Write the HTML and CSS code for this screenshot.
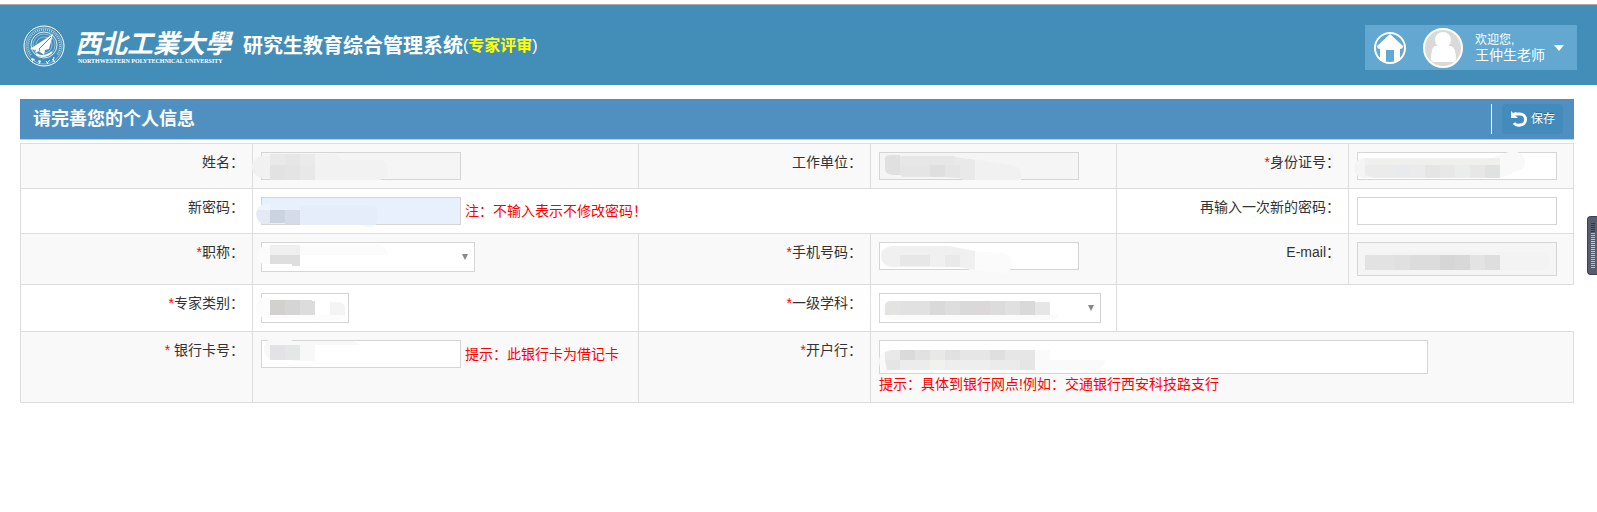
FILE: index.html
```html
<!DOCTYPE html>
<html lang="zh-CN">
<head>
  <meta charset="UTF-8">
  <meta name="viewport" content="width=device-width, initial-scale=1.0">
  <title>研究生教育综合管理系统</title>
  <link rel="stylesheet" href="styles.css">
</head>
<body>
  <header class="navbar">
    <div class="brand">
      <svg class="emblem" width="42" height="42" viewBox="0 0 42 42" fill="none" stroke="#fff">
        <circle cx="21" cy="21" r="20" stroke-width="1"/>
        <circle cx="21" cy="21" r="18" stroke-width="1" opacity=".4"/>
        <path d="M8 30 A16 16 0 1 1 34 30" stroke-width="2" stroke-dasharray="1 1" opacity=".6"/>
        <circle cx="21" cy="20" r="13" stroke-width="1" opacity=".8"/>
        <circle cx="21" cy="20" r="11" stroke-width="1" opacity=".4"/>
        <circle cx="21" cy="20" r="8" stroke-width="1" opacity=".4"/>
        <path d="M30 9 L7 24 L13 25 L12 28 L16 26 L21 30 L22 25 L26 24 Z" fill="#fff" stroke="none"/>
        <path d="M28 12 L16 24 L17 26" stroke="#438eb9" stroke-width="1"/>
        <path d="M13 29 Q21 34 29 27" stroke-width="2"/>
        <path d="M8 34 l4 1 M10 33 l-1 4 M15 36 l3 1 M17 35 l-1 4 M23 36 l2 3 M24 38 l3 -3 M29 34 l3 3 M30 37 l1 -5" stroke-width="1"/>
      </svg>
      <div class="school">
        <span class="school-cn">西北工業大學</span>
        <span class="school-en">NORTHWESTERN POLYTECHNICAL UNIVERSITY</span>
      </div>
      <h1>研究生教育综合管理系统</h1>
      <span class="role">(<b>专家评审</b>)</span>
    </div>
    <div class="user-box">
      <a class="home" href="#" aria-label="首页">
        <svg width="32" height="32" viewBox="0 0 32 32">
          <circle cx="16" cy="16" r="15" fill="none" stroke="#fff" stroke-width="2"/>
          <path d="M16 2 L29 14 Q29 17 26 17 V29 H20 V18 H12 V29 H6 V17 Q3 17 3 14 Z" fill="#fff"/>
        </svg>
      </a>
      <svg class="avatar" width="40" height="40" viewBox="0 0 40 40">
        <circle cx="20" cy="20" r="19" fill="#d9d9d9" stroke="#fff" stroke-width="2"/>
        <circle cx="20" cy="12" r="8" fill="#fff"/>
        <path d="M12 18 H28 Q33 20 33 31 Q33 34 29 34 H11 Q8 34 8 31 Q8 20 12 18 Z" fill="#fff"/>
      </svg>
      <button class="user-menu" type="button">
        <span class="user-name"><small>欢迎您,</small>王仲生老师</span>
        <span class="caret"></span>
      </button>
    </div>
  </header>

  <main class="content">
    <form>
      <div class="panel-header">
        <h2>请完善您的个人信息</h2>
        <div class="toolbar">
          <button class="save" type="button">
            <svg width="18" height="18" viewBox="0 0 18 18" fill="none">
              <path d="M5 4 H10 A5 5 0 0 1 10 15 Q6 16 4 13" stroke="#fff" stroke-width="3"/>
              <path d="M1 1 L3 3 L6 2 L5 5 L8 8 H1 Z" fill="#fff"/>
            </svg>
            保存
          </button>
        </div>
      </div>

      <table class="info">
        <colgroup>
          <col class="col-label"><col class="col-wide">
          <col class="col-label"><col class="col-mid">
          <col class="col-label"><col>
        </colgroup>
        <tr>
          <th><label for="name">姓名：</label></th>
          <td>
            <div class="field">
              <input type="text" id="name" readonly>
              <svg class="mask" width="1" height="1">
                <rect x="-9" y="4" width="34" height="22" rx="11" fill="#f1f1f1"/>
                <path d="M11 2 H72 Q78 3 80 8 H120 Q127 10 127 18 Q127 26 118 28 H11 Z" fill="#f2f2f2"/>
                <path d="M9 2 h15 v11 h-15 z" fill="#e9e9e9"/><path d="M24 2 h15 v11 h-15 z" fill="#e6e6e6"/><path d="M39 2 h15 v11 h-15 z" fill="#eaeaea"/>
                <path d="M9 13 h15 v15 h-15 z" fill="#e2e2e2"/><path d="M24 13 h15 v15 h-15 z" fill="#e4e4e4"/><path d="M39 13 h15 v15 h-15 z" fill="#e8e8e8"/>
              </svg>
            </div>
          </td>
          <th><label for="unit">工作单位：</label></th>
          <td>
            <div class="field">
              <input type="text" id="unit" readonly>
              <svg class="mask" width="1" height="1">
                <path d="M88 6 L130 13 Q142 14 142 22 V28 H88 Z" fill="#f1f1f1"/>
                <path d="M6 5 Q8 3 12 3 H21 V23 H14 Q6 22 6 17 Z" fill="#e0e0e0"/>
                <path d="M21 4 H76 V13 H21 Z" fill="#e7e7e7"/><path d="M21 13 H51 V25 H24 L21 23 Z" fill="#e5e5e5"/>
                <path d="M51 13 H66 V25 H51 Z" fill="#dfdfdf"/><path d="M66 13 H81 V26 L66 25 Z" fill="#e5e5e5"/>
                <path d="M76 5 L96 8 V28 H84 L81 26 V13 H76 Z" fill="#e9e9e9"/>
              </svg>
            </div>
          </td>
          <th><label for="idcard"><i>*</i>身份证号：</label></th>
          <td>
            <div class="field">
              <input type="text" id="idcard">
              <svg class="mask" width="1" height="1">
                <rect x="-3" y="6" width="24" height="20" rx="10" fill="#f4f4f4"/>
                <path d="M138 4 L152 0 H160 Q168 2 168 10 Q168 18 160 19 L150 24 L138 26 Z" fill="#f9f9f9"/>
                <path d="M8 6 H143 V13 H8 Z" fill="#efefee"/>
                <path d="M8 13 H38 V26 H16 L8 23 Z" fill="#ebebeb"/><path d="M38 13 H53 V26 H38 Z" fill="#e9eaed"/>
                <path d="M53 13 H68 V26 H53 Z" fill="#ebebeb"/><path d="M68 13 H83 V26 H68 Z" fill="#e5e5e5"/>
                <path d="M83 13 H98 V26 H83 Z" fill="#e8e8e8"/><path d="M98 13 H113 V26 H98 Z" fill="#ebedec"/>
                <path d="M113 13 H128 V26 H113 Z" fill="#e7e7e7"/><path d="M128 13 H143 V26 H128 Z" fill="#e0e2e1"/>
              </svg>
            </div>
          </td>
        </tr>
        <tr>
          <th><label for="pwd">新密码：</label></th>
          <td colspan="3">
            <div class="field">
              <input type="password" id="pwd" class="filled">
              <span class="tip">注：不输入表示不修改密码！</span>
              <svg class="mask" width="1" height="1">
                <path d="M98 27 H115 Q112 31 106 30 Z" fill="#f8f9fd"/>
                <path d="M39 8 H112 Q118 10 117 20 L115 28 H39 Z" fill="#e5edfb"/>
                <path d="M9 6 Q-4 8 -5 17 Q-4 27 5 27 H9 Z" fill="#e4e9f3"/>
                <path d="M9 6 V13 H-4 Q-2 7 9 6 Z" fill="#eff3fb"/>
                <path d="M9 13 H24 V26 H9 Z" fill="#ccd3e0"/><path d="M24 13 H39 V27 H24 Z" fill="#d5dbe8"/>
              </svg>
            </div>
          </td>
          <th><label for="pwd2">再输入一次新的密码：</label></th>
          <td><div class="field"><input type="password" id="pwd2"></div></td>
        </tr>
        <tr>
          <th><label for="title"><i>*</i>职称：</label></th>
          <td>
            <div class="field">
              <span class="select title-select"><select id="title"><option></option></select></span>
              <svg class="mask" width="1" height="1">
                <path d="M-4 12 Q-3 3 12 3 H118 Q126 6 127 13 H39 V22 H2 Q-4 20 -4 12 Z" fill="#fbfbfb"/>
                <path d="M9 3 H39 V13 H9 Z" fill="#efefef"/><path d="M9 13 H39 V24 H31 V22 H9 Z" fill="#dedede"/>
              </svg>
            </div>
          </td>
          <th><label for="phone"><i>*</i>手机号码：</label></th>
          <td>
            <div class="field">
              <input type="text" id="phone">
              <svg class="mask" width="1" height="1">
                <path d="M90 9 L125 11 Q133 13 133 21 Q133 31 124 31 L90 28 Z" fill="#fbfbfb"/>
                <path d="M12 4 Q2 6 2 14 Q2 23 12 25 H80 L96 28 V9 L70 4 Z" fill="#f0f0f0"/>
                <path d="M21 13 H51 V24 H21 Z" fill="#e7e7e7"/><path d="M66 13 H81 V25 H66 Z" fill="#e9e9e9"/>
              </svg>
            </div>
          </td>
          <th><label for="email">E-mail：</label></th>
          <td>
            <div class="field">
              <input type="text" id="email" class="tall" readonly>
              <svg class="mask" width="1" height="1">
                <rect x="6" y="10" width="186" height="19" rx="9" fill="#f3f3f3"/>
                <path d="M8 13 H38 V28 H8 Z" fill="#e2e2e2"/><path d="M38 13 H53 V28 H38 Z" fill="#dfe1e0"/>
                <path d="M53 13 H83 V28 H53 Z" fill="#dcdcdc"/><path d="M83 13 H98 V28 H83 Z" fill="#d6d6d6"/>
                <path d="M98 13 H113 V28 H98 Z" fill="#d8d8d8"/><path d="M113 13 H128 V28 H113 Z" fill="#e3e3e3"/>
                <path d="M128 13 H143 V28 H128 Z" fill="#dedede"/>
              </svg>
            </div>
          </td>
        </tr>
        <tr>
          <th><label for="category"><i>*</i>专家类别：</label></th>
          <td>
            <div class="field">
              <select id="category"><option></option></select>
              <svg class="mask" width="1" height="1">
                <path d="M9 5 H0 Q-5 8 -5 15 Q-5 24 5 25 L76 28 Q84 27 84 20 L54 8 Z" fill="#fcfcfc"/>
                <path d="M9 7 H24 V22 H9 Z" fill="#d2d1cf"/><path d="M24 7 H39 V22 H24 Z" fill="#d5d5d4"/><path d="M39 7 H51 V8 H54 V22 H39 Z" fill="#dcdcdc"/>
                <path d="M54 8 H69 V22 H54 Z" fill="#fff"/><path d="M69 9 H78 Q84 11 84 14 V22 H69 Z" fill="#f4f4f4"/>
              </svg>
            </div>
          </td>
          <th><label for="subject"><i>*</i>一级学科：</label></th>
          <td>
            <div class="field">
              <span class="select subject-select"><select id="subject"><option></option></select></span>
              <svg class="mask" width="1" height="1">
                <path d="M6 10 Q2 15 5 21 Q8 27 14 27 H172 Q180 26 180 22 Z" fill="#fbfbfb"/>
                <path d="M6 12 Q7 8 12 8 H21 V22 H6 Z" fill="#e3e3e2"/><path d="M21 8 H51 V22 H21 Z" fill="#e1e1e1"/>
                <path d="M51 8 H66 V22 H51 Z" fill="#d9d9d9"/><path d="M66 8 H81 V22 H66 Z" fill="#dedede"/>
                <path d="M81 8 H96 V22 H81 Z" fill="#dad9d9"/><path d="M96 8 H111 V22 H96 Z" fill="#dcd8d8"/>
                <path d="M111 8 H126 V22 H111 Z" fill="#dcdcdc"/><path d="M126 8 H141 V22 H126 Z" fill="#dfe1e0"/>
                <path d="M141 8 H156 V22 H141 Z" fill="#d9d9d9"/><path d="M156 9 H171 V22 H156 Z" fill="#e6e6e6"/>
              </svg>
            </div>
          </td>
        </tr>
        <tr>
          <th><label for="card"><i>*</i> 银行卡号：</label></th>
          <td>
            <div class="field">
              <input type="text" id="card">
              <span class="tip">提示：此银行卡为借记卡</span>
              <svg class="mask" width="1" height="1">
                <path d="M9 -1 H28 L32 1 H92 Q98 3 98 5 H54 V21 H32 L28 19 H9 Q3 16 3 9 Q3 2 9 -1 Z" fill="#f8f8f8"/>
                <path d="M9 5 H24 V20 H9 Z" fill="#e3e3e6"/><path d="M24 5 H39 V20 H24 Z" fill="#e4e7e5"/>
              </svg>
            </div>
          </td>
          <th><label for="bank"><i>*</i>开户行：</label></th>
          <td colspan="3">
            <div class="field">
              <input type="text" id="bank" class="tall bank">
              <svg class="mask" width="1" height="1">
                <path d="M10 11 Q0 12 0 21 Q0 30 9 32 L20 30 H215 Q226 28 226 20 H171 V10 H20 Z" fill="#fafafa"/>
                <path d="M6 12 L12 10 H21 V20 H6 Z" fill="#e9e9e8"/><path d="M21 10 H36 V20 H21 Z" fill="#dadada"/>
                <path d="M36 10 H51 V20 H36 Z" fill="#e1e1e1"/><path d="M51 10 H66 V20 H51 Z" fill="#e8e8e6"/>
                <path d="M66 10 H81 V20 H66 Z" fill="#e1e1e1"/><path d="M81 10 H111 V20 H81 Z" fill="#e6e6e6"/>
                <path d="M111 10 H126 V20 H111 Z" fill="#dfdfdf"/><path d="M126 10 H156 V20 H126 Z" fill="#e6e6e6"/>
                <path d="M6 20 H21 V30 H8 Z" fill="#e5e5e5"/><path d="M21 20 H51 V30 H21 Z" fill="#ececec"/>
                <path d="M51 20 H66 V30 H51 Z" fill="#f1f1ee"/><path d="M66 20 H111 V30 H66 Z" fill="#eee"/>
                <path d="M111 20 H141 V30 H111 Z" fill="#ebebeb"/><path d="M141 20 H156 V30 H141 Z" fill="#e5e5e5"/>
              </svg>
            </div>
            <span class="tip">提示：具体到银行网点!例如：交通银行西安科技路支行</span>
          </td>
        </tr>
      </table>
    </form>
  </main>

  <div class="meter"><span></span></div>
</body>
</html>
```
FILE: styles.css
```css
* {
  box-sizing: border-box;
}

body {
  margin: 0;
  padding-top: 4px;
  background: #fff;
  color: #333;
  font-family: "Liberation Sans", "Noto Sans CJK SC", sans-serif;
  font-size: 14px;
  line-height: 20px;
}

h1, h2 {
  margin: 0;
}

button, input, select {
  font: inherit;
}

/* top bar */
.navbar {
  display: flex;
  justify-content: space-between;
  align-items: flex-start;
  height: 81px;
  padding: 20px 20px 0 23px;
  border-top: 1px solid #aaa;
  background: #438eb9;
  color: #fff;
}

.brand {
  display: flex;
  align-items: center;
}

.school {
  display: flex;
  flex-direction: column;
  width: 160px;
  margin: 0 8px 0 10px;
  white-space: nowrap;
}

.school-cn {
  font-family: "Noto Sans CJK TC", sans-serif;
  font-size: 26px;
  font-weight: bold;
  font-style: italic;
  line-height: 30px;
}

.school-en {
  padding-left: 3px;
  font-family: "Liberation Serif", serif;
  font-size: 6px;
  font-weight: bold;
  line-height: 8px;
}

.brand h1 {
  font-size: 20px;
  line-height: 28px;
}

.role {
  font-size: 16px;
  line-height: 24px;
}

.role b {
  color: #ff0;
}

.user-box {
  display: flex;
  align-items: center;
  height: 45px;
  padding: 0 13px 0 9px;
  background: #62a8d1;
}

.home, .home svg, .avatar {
  display: block;
}

.avatar {
  margin: 0 12px 0 17px;
}

.user-menu {
  display: flex;
  align-items: center;
  gap: 9px;
  padding: 0;
  border: 0;
  background: none;
  color: #fff;
  line-height: 15px;
  text-align: left;
  cursor: pointer;
}

.user-name small {
  display: block;
  font-size: 12px;
}

.caret {
  border: 5px solid transparent;
  border-top: 6px solid #fff;
  border-bottom: 0;
}

/* form */
.content {
  padding: 14px 23px 0 20px;
}

.panel-header {
  display: flex;
  justify-content: space-between;
  align-items: center;
  height: 41px;
  margin-bottom: 3px;
  padding: 0 11px 0 13px;
  border-bottom: 1px solid #ccc;
  background: #4f90c1;
  color: #fff;
}

.panel-header h2 {
  font-size: 18px;
  line-height: 26px;
}

.toolbar {
  display: flex;
  height: 30px;
  padding-left: 10px;
  border-left: 1px solid #fff;
}

.save {
  display: flex;
  align-items: center;
  gap: 3px;
  padding: 0 8px;
  border: 0;
  border-radius: 4px;
  background: #428bbb;
  color: #fff;
  font-size: 12px;
  text-shadow: 0 -1px 0 rgba(0, 0, 0, 0.25);
  cursor: pointer;
}

.info {
  width: 100%;
  border-collapse: collapse;
  table-layout: fixed;
}

.col-label {
  width: 232px;
}

.col-wide {
  width: 386px;
}

.col-mid {
  width: 246px;
}

.info th, .info td {
  padding: 8px;
  border: 1px solid #ddd;
  vertical-align: top;
}

.info th {
  font-weight: normal;
  text-align: right;
}

.info tr:nth-child(odd) > * {
  background: #f9f9f9;
}

.info i, .tip {
  color: #f00;
  font-style: normal;
}

.tip {
  display: block;
  white-space: nowrap;
}

.field {
  position: relative;
  display: flex;
  align-items: center;
  gap: 4px;
}

.field input {
  width: 200px;
  height: 28px;
  padding: 4px;
  border: 1px solid #d5d5d5;
  border-radius: 0;
  background: #fff;
}

.field input[readonly] {
  background: #f5f5f5;
}

.field .filled {
  background: #e8f0fe;
}

.field .tall {
  height: 34px;
}

.field .bank {
  width: 549px;
}

.field select {
  width: 88px;
  height: 30px;
  padding: 3px 6px;
  border: 1px solid #d5d5d5;
  border-radius: 0;
  background: #fff;
  appearance: none;
}

.select {
  position: relative;
  display: block;
}

.select select {
  display: block;
  width: 100%;
}

.title-select {
  width: 214px;
}

.subject-select {
  width: 222px;
}

.select::after {
  content: "";
  position: absolute;
  top: 12px;
  right: 7px;
  border: 3px solid transparent;
  border-top: 6px solid #888;
  border-bottom: 0;
}

/* greyed-out private values */
.mask {
  position: absolute;
  top: 0;
  left: 0;
  overflow: visible;
  pointer-events: none;
}

/* level meter on the right edge */
.meter {
  position: fixed;
  top: 216px;
  right: 0;
  width: 10px;
  height: 59px;
  padding: 6px 2px 6px 3px;
  border: 1px solid #3d424f;
  border-right: 0;
  border-radius: 4px 0 0 4px;
  background: #585e6e;
}

.meter span {
  display: block;
  height: 45px;
  background:
    repeating-linear-gradient(transparent 0 1px, #585e6e 1px 2px),
    linear-gradient(#333845 0 10px, #f0ad4e 10px, #e8dc5a 20px, #9fe08a 32px, #5fe3d0 45px);
}
```
